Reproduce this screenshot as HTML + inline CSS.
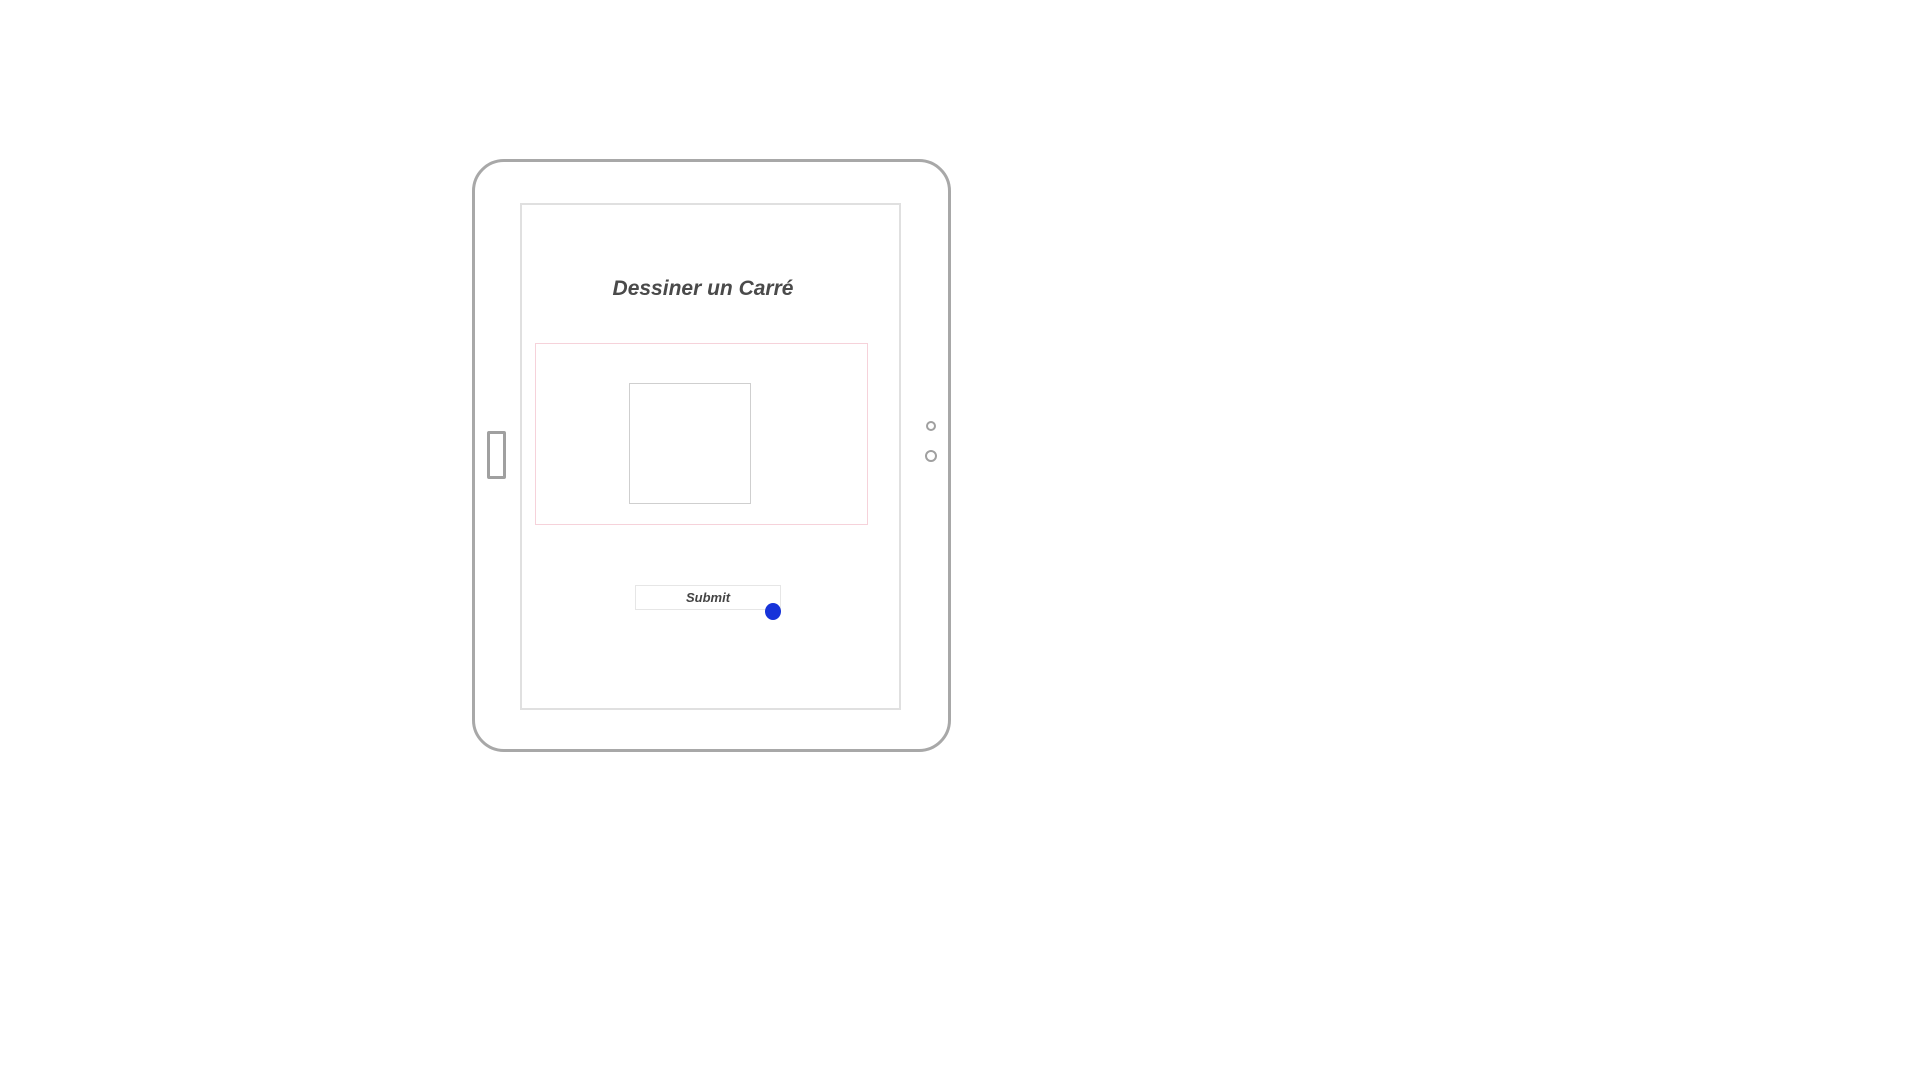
<!DOCTYPE html>
<html><head><meta charset="utf-8"><style>
html,body{margin:0;padding:0;background:#fff;width:1920px;height:1080px;overflow:hidden;position:relative;font-family:"Liberation Sans",sans-serif}
div{position:absolute;box-sizing:border-box}
</style></head><body>
<div style="left:472px;top:159px;width:479px;height:593px;border:3px solid #a8a8a8;border-radius:32px"></div>
<div style="left:520px;top:203px;width:381px;height:507px;border:2px solid #e0e0e0"></div>
<div style="left:487px;top:431px;width:19px;height:48px;border:3px solid #a0a0a0;border-radius:2px"></div>
<div style="left:926px;top:421px;width:10px;height:10px;border:2px solid #a0a0a0;border-radius:50%"></div>
<div style="left:925px;top:450px;width:12px;height:12px;border:2px solid #a0a0a0;border-radius:50%"></div>
<div style="left:553px;top:277px;width:300px;text-align:center;font-size:21px;font-weight:bold;font-style:italic;color:#4a4a4a">Dessiner un Carré</div>
<div style="left:535px;top:343px;width:333px;height:182px;border:1px solid #f6d2da"></div>
<div style="left:629px;top:383px;width:122px;height:121px;border:1px solid #cfcfcf"></div>
<div style="left:635px;top:585px;width:146px;height:25px;border:1px solid #e6e6e6;text-align:center;font-size:13px;font-weight:bold;font-style:italic;line-height:23px;color:#444">Submit</div>
<div style="left:765px;top:603px;width:16px;height:17px;background:#1733d9;border-radius:50%"></div>
</body></html>
